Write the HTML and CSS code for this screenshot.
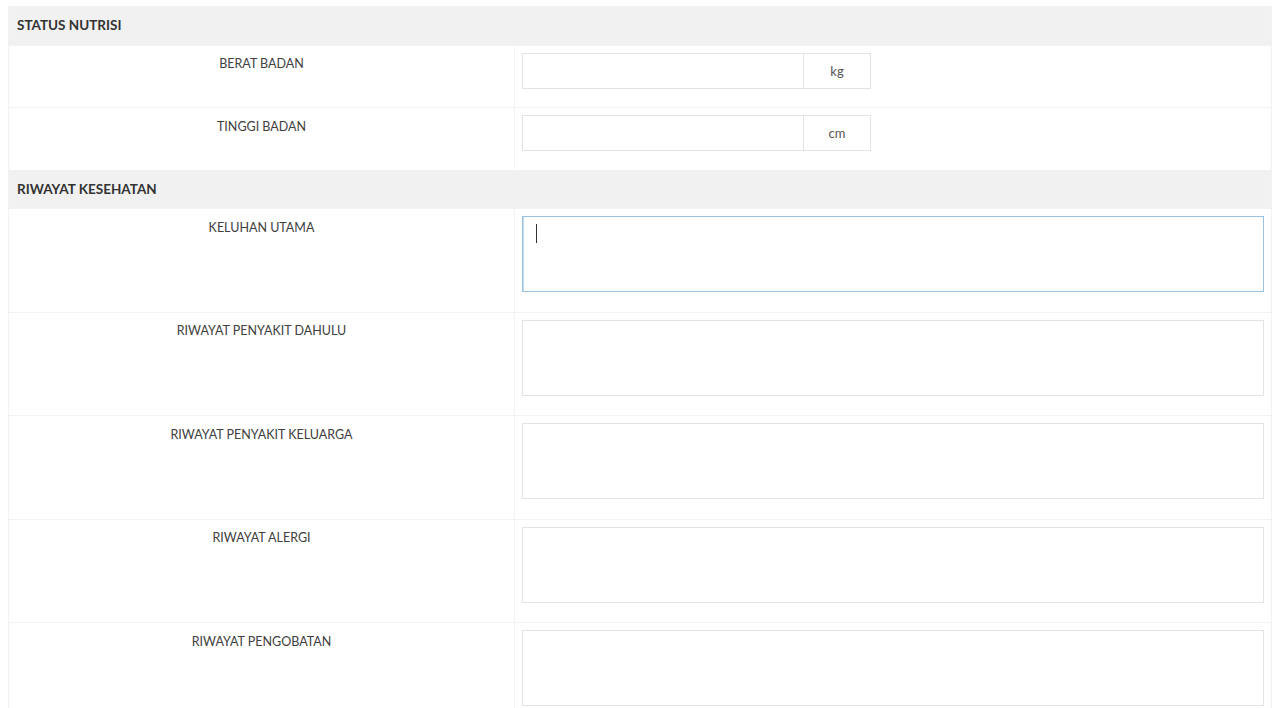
FILE: index.html
```html
<!DOCTYPE html>
<html lang="id">
<head>
<meta charset="utf-8">
<title>Form</title>
<link rel="stylesheet" href="styles.css">
</head>
<body>
<div class="page">
  <table class="form-table">
    <colgroup><col class="col-label"><col class="col-input"></colgroup>
    <tr class="section"><td colspan="2">STATUS NUTRISI</td></tr>
    <tr class="row">
      <td class="label">BERAT BADAN</td>
      <td class="field">
        <div class="input-group"><input class="control" type="text"><span class="addon">kg</span></div>
      </td>
    </tr>
    <tr class="row">
      <td class="label">TINGGI BADAN</td>
      <td class="field">
        <div class="input-group"><input class="control" type="text"><span class="addon">cm</span></div>
      </td>
    </tr>
    <tr class="section"><td colspan="2">RIWAYAT KESEHATAN</td></tr>
    <tr class="row">
      <td class="label">KELUHAN UTAMA</td>
      <td class="field tall"><div class="ta-wrap"><textarea class="area focus"></textarea><span class="caret"></span></div></td>
    </tr>
    <tr class="row">
      <td class="label">RIWAYAT PENYAKIT DAHULU</td>
      <td class="field tall"><div class="ta-wrap"><textarea class="area"></textarea></div></td>
    </tr>
    <tr class="row">
      <td class="label">RIWAYAT PENYAKIT KELUARGA</td>
      <td class="field tall"><div class="ta-wrap"><textarea class="area"></textarea></div></td>
    </tr>
    <tr class="row">
      <td class="label">RIWAYAT ALERGI</td>
      <td class="field tall"><div class="ta-wrap"><textarea class="area"></textarea></div></td>
    </tr>
    <tr class="row">
      <td class="label">RIWAYAT PENGOBATAN</td>
      <td class="field tall"><div class="ta-wrap"><textarea class="area"></textarea></div></td>
    </tr>
  </table>
</div>
</body>
</html>
```
FILE: styles.css
```css
html, body {
  margin: 0;
  padding: 0;
  background: #ffffff;
}
body {
  font-family: "Lato", "Liberation Sans", sans-serif;
  font-size: 12.5px;
  color: #333333;
  overflow: hidden;
}
.page {
  padding: 6px 8px 0 8px;
}
.form-table {
  width: 100%;
  border-collapse: collapse;
  border-left: 1px solid #f2f2f2;
  border-right: 1px solid #f2f2f2;
  table-layout: fixed;
}
.col-label { width: 506px; }
.section td {
  background: #f1f1f1;
  font-weight: bold;
  font-size: 13.5px;
  height: 38.5px;
  padding: 0 0 0 8px;
  vertical-align: middle;
  color: #333;
}
.row td {
  border-top: 1px solid #f3f3f3;
  vertical-align: top;
}
.label {
  text-align: center;
  padding: 10.5px 8px 0 8px;
  line-height: 16px;
  border-right: 1px solid #f3f3f3;
  color: #404040;
}
.field {
  padding: 7px 7px 18.5px 7px;
}
.field.tall {
  padding-bottom: 19.5px;
}
.input-group {
  display: flex;
  width: 349px;
  height: 36px;
}
.control {
  flex: 1;
  min-width: 0;
  margin: 0;
  box-sizing: border-box;
  height: 36px;
  border: 1px solid #e3e3e3;
  border-right: none;
  padding: 0 10px;
  font: inherit;
  outline: none;
  background: #fff;
}
.addon {
  width: 68px;
  box-sizing: border-box;
  border: 1px solid #e3e3e3;
  display: flex;
  align-items: center;
  justify-content: center;
  color: #555;
  font-size: 13px;
  background: #fff;
}
.ta-wrap {
  position: relative;
  height: 76px;
}
.area {
  display: block;
  box-sizing: border-box;
  width: 100%;
  height: 76px;
  margin: 0;
  border: 1px solid #e3e3e3;
  resize: none;
  outline: none;
  font: inherit;
  padding: 8px 13px;
  background: #fff;
}
.area.focus {
  border-color: #98c0e0;
  box-shadow: inset 1px 0 0 #c8ddef;
}
.caret {
  position: absolute;
  left: 14px;
  top: 8px;
  width: 1px;
  height: 19px;
  background: #333;
}
```
